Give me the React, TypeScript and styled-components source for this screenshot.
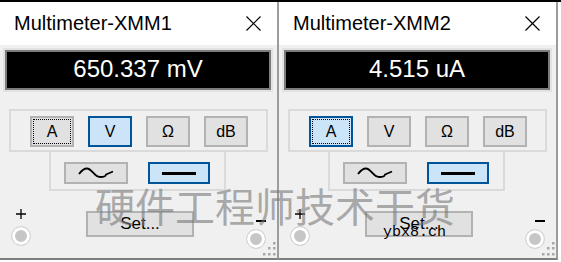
import styled, { createGlobalStyle } from "styled-components"

const GlobalStyle = createGlobalStyle`
	html, body {
		margin: 0;
		padding: 0;
		background: #fff;
	}
	body {
		font-family: "Liberation Sans", Arial, sans-serif;
	}
`

type MeterProps = {
	title: string
	reading: string
	unit: "A" | "V" | "Ω" | "dB"
}

const units: MeterProps["unit"][] = ["A", "V", "Ω", "dB"]

const Meter = ({ title, reading, unit }: MeterProps) => {
	return (
		<Window>
			<TitleBar>
				<Title>{title}</Title>
				<CloseIcon viewBox="0 0 15 15">
					<path d="M0.5 0.5 L14.5 14.5 M14.5 0.5 L0.5 14.5" stroke="#000" strokeWidth="1.2" />
				</CloseIcon>
			</TitleBar>
			<Body>
				<DisplayFrame>
					<Display>{reading}</Display>
				</DisplayFrame>
				<UnitGroup>
					{units.map((u) => (
						<KeyButton key={u} $active={u === unit} $focused={u === "A"}>
							{u}
						</KeyButton>
					))}
				</UnitGroup>
				<ModeGroup>
					<ModeButton>
						<svg width="36" height="12" viewBox="0 0 36 12">
							<path d="M1 7 C4 3 6 1.5 9 1.5 C14 1.5 16 10 22 10 C26 10 28 9 28 7.5 L35 4.5" fill="none" stroke="#000" strokeWidth="1.8" />
						</svg>
					</ModeButton>
					<ModeButton $active>
						<DcLine />
					</ModeButton>
				</ModeGroup>
				<BottomRow>
					<Terminal>
						<svg width="10" height="10" viewBox="0 0 10 10">
							<path d="M0 5 H10 M5 0 V10" stroke="#000" strokeWidth="1.3" />
						</svg>
						<Jack $top={7} />
					</Terminal>
					<SetButton>Set...</SetButton>
					<RightTerminal>
						<MinusSign />
						<Jack $top={7} />
					</RightTerminal>
				</BottomRow>
				<Grip viewBox="0 0 16 16">
					{[
						[13, 1],
						[13, 6],
						[8, 6],
						[13, 12],
						[8, 12],
						[3, 12],
					].map(([x, y], i) => (
						<rect key={i} x={x} y={y} width="2.5" height="2.5" fill="#a8a8a8" />
					))}
				</Grip>
			</Body>
		</Window>
	)
}

const App = () => {
	return (
		<Page>
			<GlobalStyle />
			<Meter title="Multimeter-XMM1" reading="650.337 mV" unit="V" />
			<Meter title="Multimeter-XMM2" reading="4.515 uA" unit="A" />
			<Watermark>硬件工程师技术干货</Watermark>
			<SiteMark>ybx8.ch</SiteMark>
		</Page>
	)
}

export default App

const Page = styled.div`
	position: relative;
	display: flex;
	width: 561px;
	height: 262px;
	border-top: 2px solid #000;
	box-sizing: border-box;
	overflow: hidden;
	background: #fff;
`

const Window = styled.div`
	display: flex;
	flex-direction: column;
	width: 277px;
	height: 256px;
	flex-shrink: 0;
	border-right: 2px solid #9c9c9c;
	border-bottom: 2px solid #7e7e7e;
`

const TitleBar = styled.div`
	display: flex;
	align-items: center;
	justify-content: space-between;
	height: 43px;
	padding: 0 16px 0 14px;
	background: #fff;
`

const Title = styled.div`
	font-size: 20px;
	line-height: 43px;
	color: #000;
`

const CloseIcon = styled.svg`
	width: 15px;
	height: 15px;
`

const Body = styled.div`
	position: relative;
	flex: 1;
	display: flex;
	flex-direction: column;
	align-items: flex-start;
	padding-top: 3px;
	background: #f0f0f0;
`

const DisplayFrame = styled.div`
	margin-left: 3px;
	width: 270px;
	box-sizing: border-box;
	border: 2px solid #e2e2e2;
`

const Display = styled.div`
	height: 36px;
	line-height: 33px;
	border: 2px solid #7c7c7c;
	background: #000;
	color: #fff;
	font-size: 24px;
	text-align: center;
`

const UnitGroup = styled.div`
	display: flex;
	gap: 14px;
	margin: 17px 0 0 9px;
	width: 259px;
	box-sizing: border-box;
	padding: 5px 0 3px 19px;
	border: 2px solid #dadada;
`

const KeyButton = styled.div<{ $active?: boolean; $focused?: boolean }>`
	position: relative;
	width: 44px;
	height: 31px;
	box-sizing: border-box;
	display: flex;
	align-items: center;
	justify-content: center;
	font-size: 16px;
	color: #000;
	background: ${(p) => (p.$active ? "#cce4f7" : "#e1e1e1")};
	border: 2px solid ${(p) => (p.$active ? "#005499" : "#b2b2b2")};

	&::after {
		content: "";
		display: ${(p) => (p.$focused ? "block" : "none")};
		position: absolute;
		inset: 1px;
		border: 1px dotted #000;
	}
`

const ModeGroup = styled.div`
	display: flex;
	gap: 20px;
	margin-left: 49px;
	width: 177px;
	box-sizing: border-box;
	padding: 10px 0 5px 13px;
	border: 2px solid #dadada;
	border-top: none;
`

const ModeButton = styled.div<{ $active?: boolean }>`
	width: ${(p) => (p.$active ? "62px" : "64px")};
	height: 22px;
	box-sizing: border-box;
	display: flex;
	align-items: center;
	justify-content: center;
	background: ${(p) => (p.$active ? "#cce4f7" : "#e1e1e1")};
	border: 2px solid ${(p) => (p.$active ? "#005499" : "#b2b2b2")};
`

const DcLine = styled.div`
	width: 34px;
	height: 3px;
	background: #000;
`

const BottomRow = styled.div`
	display: flex;
	align-items: flex-start;
	align-self: stretch;
	padding: 18px 11px 0 11px;
`

const Terminal = styled.div`
	display: flex;
	flex-direction: column;
	align-items: center;
	width: 20px;
`

const RightTerminal = styled(Terminal)`
	margin-left: auto;
	align-items: flex-end;
	padding-top: 11px;
`

const MinusSign = styled.div`
	width: 10px;
	height: 1.5px;
	background: #000;
`

const Jack = styled.div<{ $top: number }>`
	margin-top: ${(p) => p.$top}px;
	width: 20px;
	height: 20px;
	box-sizing: border-box;
	border-radius: 50%;
	border: 1px solid #d6d6d6;
	background: #c6c6c6;
	box-shadow: inset 0 0 0 3px #fff;
`

const SetButton = styled.div`
	margin: 2px 0 0 55px;
	width: 108px;
	height: 26px;
	box-sizing: border-box;
	display: flex;
	align-items: center;
	justify-content: center;
	background: #e1e1e1;
	border: 2px solid #b2b2b2;
	font-size: 17px;
	color: #000;
`

const Grip = styled.svg`
	position: absolute;
	right: 1px;
	bottom: 1px;
	width: 16px;
	height: 16px;
`

const Watermark = styled.div`
	position: absolute;
	left: 95px;
	top: 183px;
	font-family: "Noto Sans CJK SC", sans-serif;
	font-size: 40px;
	line-height: 40px;
	white-space: nowrap;
	color: rgba(120, 120, 120, 0.6);
	pointer-events: none;
`

const SiteMark = styled.div`
	position: absolute;
	left: 383px;
	top: 222px;
	font-family: "Liberation Mono", monospace;
	font-size: 15px;
	line-height: 17px;
	color: #000;
	pointer-events: none;
`
